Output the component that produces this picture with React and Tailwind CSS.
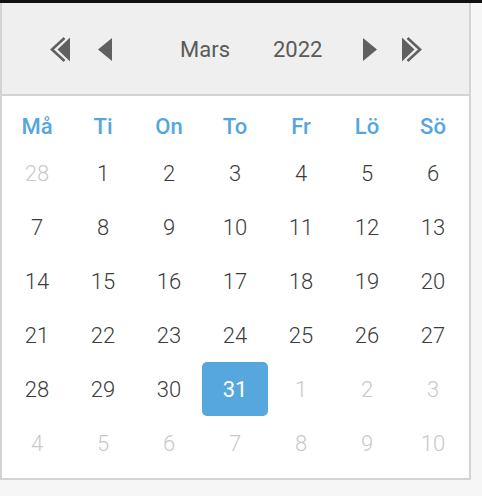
import React from "react";

const DoubleLeft = ({ flip }) => (
  <svg width="20" height="25" viewBox="0 0 20 25" className={flip ? "-scale-x-100" : ""}>
    <polygon points="20,0.5 7.5,12.5 20,24.5" fill="#606060" />
    <polyline points="14.5,1 2,12.5 14.5,24" fill="none" stroke="#606060" strokeWidth="2.6" />
  </svg>
);

const Tri = ({ flip }) => (
  <svg width="14" height="23" viewBox="0 0 14 23" className={flip ? "-scale-x-100" : ""}>
    <polygon points="14,0 0,11.5 14,23" fill="#606060" />
  </svg>
);

const days = ["Må", "Ti", "On", "To", "Fr", "Lö", "Sö"];

const weeks = [
  [[28, 1], [1], [2], [3], [4], [5], [6]],
  [[7], [8], [9], [10], [11], [12], [13]],
  [[14], [15], [16], [17], [18], [19], [20]],
  [[21], [22], [23], [24], [25], [26], [27]],
  [[28], [29], [30], [31, 2], [1, 1], [2, 1], [3, 1]],
  [[4, 1], [5, 1], [6, 1], [7, 1], [8, 1], [9, 1], [10, 1]],
];

export default function App() {
  return (
    <div
      className="w-[482px] h-[496px] bg-[#f6f6f6] overflow-hidden"
      style={{ fontFamily: "Roboto, 'Liberation Sans', sans-serif" }}
    >
      <div className="h-[3px] bg-[#111111]" />
      <div className="w-[471px] h-[477px] bg-white border-2 border-t-0 border-[#d3d3d3]">
        <div className="h-[93px] bg-[#efefef] border-b-2 border-[#d3d3d3] flex items-center pl-[48px] pt-[2px] text-[22px] text-[#5a5a5a]">
          <DoubleLeft />
          <div className="ml-[28px] flex"><Tri /></div>
          <span className="ml-[68px] leading-[26px]">Mars</span>
          <span className="ml-[43px] leading-[26px]">2022</span>
          <div className="ml-[41px] flex"><Tri flip /></div>
          <div className="ml-[25px] flex"><DoubleLeft flip /></div>
        </div>
        <div className="px-[2px]">
          <div className="grid grid-cols-[repeat(7,66px)] pt-[18px] pb-[6px]">
            {days.map((d) => (
              <div key={d} className="text-center text-[22px] leading-[26px] font-medium text-[#56a6de]">
                {d}
              </div>
            ))}
          </div>
          {weeks.map((w, i) => (
            <div key={i} className="grid grid-cols-[repeat(7,66px)]">
              {w.map(([n, t], j) => (
                <div
                  key={j}
                  className={
                    "h-[54px] flex items-center justify-center text-[22px] leading-[26px] font-light pt-[2px] " +
                    (t === 2
                      ? "bg-[#56a7de] text-white rounded-[5px] font-normal"
                      : t === 1
                      ? "text-[#c9c9c9]"
                      : "text-[#3c3c3c]")
                  }
                >
                  {n}
                </div>
              ))}
            </div>
          ))}
        </div>
      </div>
    </div>
  );
}
